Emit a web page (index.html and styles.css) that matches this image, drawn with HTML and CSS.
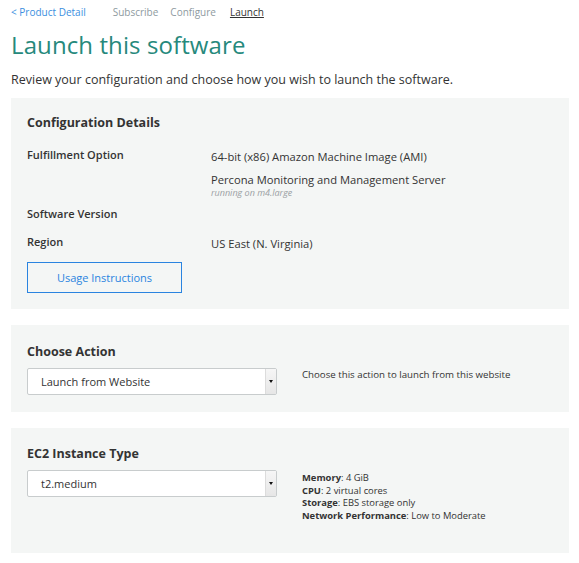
FILE: index.html
```html
<!DOCTYPE html>
<html>
<head>
<meta charset="utf-8">
<link rel="stylesheet" href="styles.css">
</head>
<body>
<nav class="crumbs">
  <a class="back">&lt; Product Detail</a>
  <span class="step">Subscribe</span>
  <span class="step">Configure</span>
  <span class="step current">Launch</span>
</nav>
<h1 class="title">Launch this software</h1>
<p class="lead">Review your configuration and choose how you wish to launch the software.</p>

<section class="panel config">
  <h2 class="panel-title">Configuration Details</h2>
  <div class="detail-grid">
    <div class="label">Fulfillment Option</div>
    <div class="value">
      <div class="v-line">64-bit (x86) Amazon Machine Image (AMI)</div>
      <div class="v-line second">Percona Monitoring and Management Server</div>
      <div class="note">running on m4.large</div>
    </div>
    <div class="label">Software Version</div>
    <div class="value"></div>
    <div class="label region">Region</div>
    <div class="value region-v">US East (N. Virginia)</div>
  </div>
  <button class="outline-btn">Usage Instructions</button>
</section>

<section class="panel action">
  <h2 class="panel-title">Choose Action</h2>
  <div class="row">
    <div class="select"><span class="sel-text">Launch from Website</span><span class="sel-arrow"></span></div>
    <div class="help">Choose this action to launch from this website</div>
  </div>
</section>

<section class="panel instance">
  <h2 class="panel-title">EC2 Instance Type</h2>
  <div class="row">
    <div class="select"><span class="sel-text">t2.medium</span><span class="sel-arrow"></span></div>
    <div class="specs">
      <div><b>Memory</b>: 4 GiB</div>
      <div><b>CPU</b>: 2 virtual cores</div>
      <div><b>Storage</b>: EBS storage only</div>
      <div><b>Network Performance</b>: Low to Moderate</div>
    </div>
  </div>
</section>
</body>
</html>
```

FILE: styles.css
```css
* { box-sizing: border-box; }
body {
  margin: 0;
  padding: 0 10px 0 11px;
  font-family: "Open Sans", "Noto Sans", "DejaVu Sans", sans-serif;
  color: #333;
  background: #fff;
  width: 579px;
}
.crumbs {
  display: flex;
  align-items: center;
  height: 22px;
  padding-top: 1px;
  font-size: 10px;
}
.crumbs .back { color: #3b8fe0; margin-right: 27px; }
.crumbs .step { color: #8e9aa0; margin-right: 12px; }
.crumbs .current { color: #333; text-decoration: underline; margin-left: 2px; }
.title {
  margin: 7px 0 0;
  font-weight: 400;
  font-size: 24px;
  line-height: 32px;
  color: #26897c;
  letter-spacing: 0.1px;
}
.lead {
  margin: 10px 0 0;
  font-size: 12.5px;
  line-height: 18px;
  color: #333;
}
.panel {
  background: #f4f6f5;
  width: 558px;
  padding: 16px 16px 0 16px;
}
.config { margin-top: 9px; height: 211px; }
.action { margin-top: 16px; height: 87px; }
.instance { margin-top: 16px; height: 125px; }
.panel-title {
  margin: 0;
  font-size: 12.5px;
  font-weight: 700;
  color: #333;
  line-height: 18px;
}
.action .panel-title { margin-top: 2px; }
.instance .panel-title { margin-top: 1px; }
.detail-grid {
  display: grid;
  grid-template-columns: 184px 1fr;
  margin-top: 16px;
  font-size: 11.2px;
}
.label {
  font-weight: 600;
  color: #333;
  line-height: 14px;
  height: 59px;
  font-size: 11px;
}
.label:nth-of-type(3) { height: 28px; }
.value { color: #333; line-height: 14px; }
.v-line { padding-top: 2px; }
.v-line.second { margin-top: 9px; padding-top: 0; }
.note {
  font-size: 9px;
  font-style: italic;
  color: #9aa0a3;
  line-height: 12px;
  margin-top: 0;
}
.region-v { padding-top: 2px; }
.label.region { height: 20px; }
.outline-btn {
  display: block;
  margin-top: 7px;
  width: 155px;
  height: 31px;
  border: 1px solid #2a84e0;
  background: transparent;
  color: #2a84e0;
  font-family: inherit;
  font-size: 11px;
  padding: 0;
}
.row {
  display: flex;
  align-items: flex-start;
  margin-top: 7px;
}
.select {
  width: 250px;
  height: 27px;
  background: #fff;
  border: 1px solid #c8cccd;
  border-radius: 2px;
  display: flex;
  align-items: center;
  font-size: 11px;
  color: #333;
  flex-shrink: 0;
}
.sel-text { flex: 1; padding-left: 13px; }
.sel-arrow {
  width: 11px;
  align-self: stretch;
  background: linear-gradient(#f6f6f6, #e6e6e6);
  border-left: 1px solid #dcdcdc;
  position: relative;
}
.sel-arrow::after {
  content: "";
  position: absolute;
  left: 3px;
  top: 11px;
  border-left: 2.5px solid transparent;
  border-right: 2.5px solid transparent;
  border-top: 3px solid #111;
}
.help {
  margin-left: 25px;
  font-size: 9.7px;
  line-height: 12px;
  color: #333;
  margin-top: 1px;
}
.specs {
  margin-left: 25px;
  font-size: 9.4px;
  line-height: 12.7px;
  color: #333;
  margin-top: 2px;
}
.specs b { font-weight: 700; }
```
